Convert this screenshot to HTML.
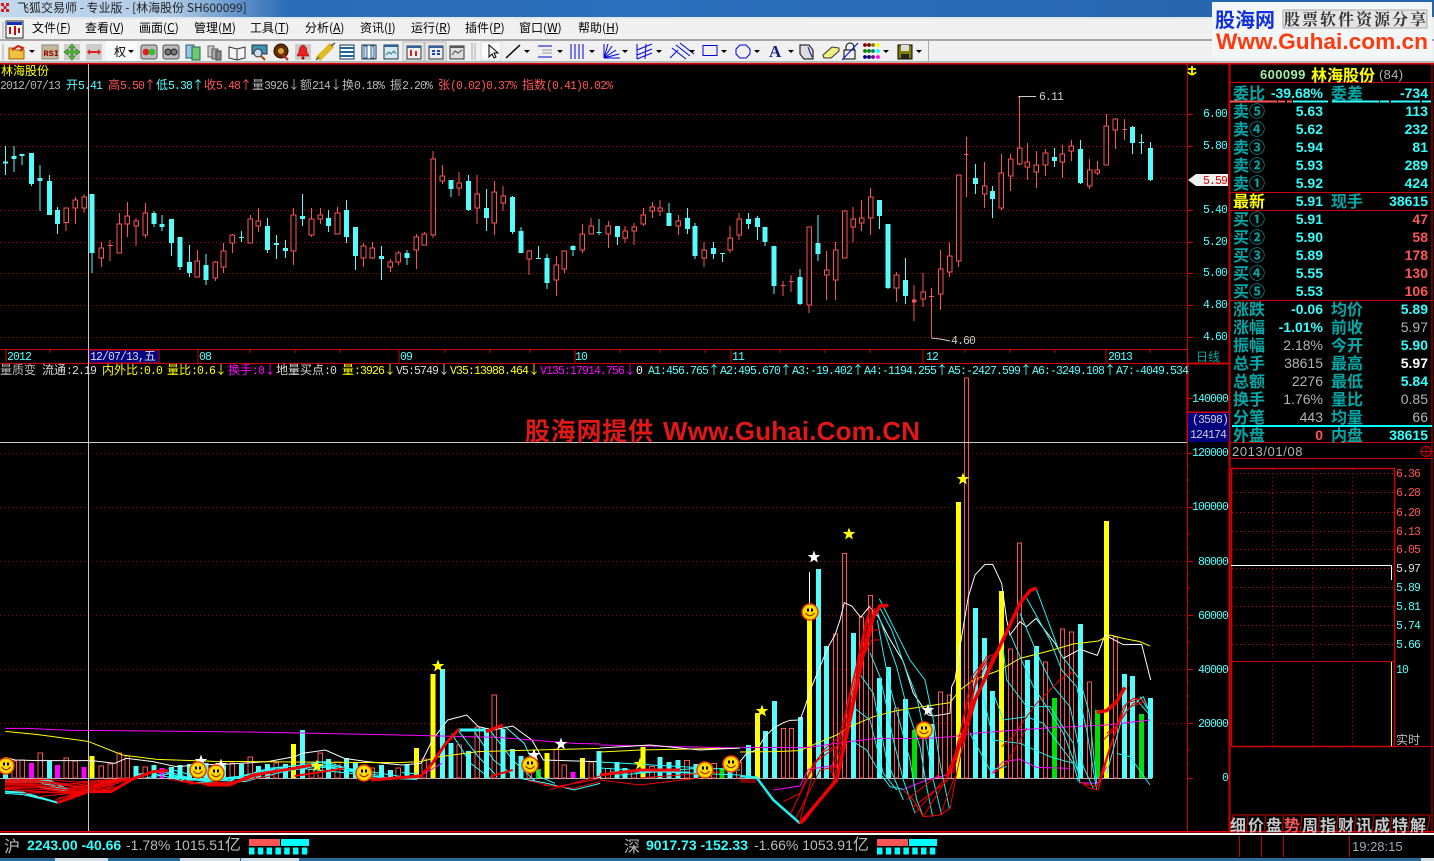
<!DOCTYPE html>
<html><head><meta charset="utf-8"><title>飞狐交易师</title>
<style>
html,body{margin:0;padding:0;background:#000;width:1434px;height:861px;overflow:hidden}
svg{position:absolute;left:0;top:0}
p{position:absolute;margin:0;white-space:pre}
i{font-style:normal;font:12px "WenQuanYi Zen Hei","Noto Sans CJK SC",sans-serif;line-height:0;letter-spacing:0}
.s{font:11.5px/12px "Liberation Mono",monospace;letter-spacing:-.9px;color:#5ff;margin-top:2px}
.m{font:12px/14px "WenQuanYi Zen Hei","Noto Sans CJK SC",sans-serif;color:#000}
.m u{text-decoration:underline}
.b{font:bold 16px/18px "WenQuanYi Zen Hei","Noto Sans CJK SC",sans-serif;color:#00a8a8;left:1233px;margin-top:-1px}
.l{left:1331px}
.v{font:bold 14px/18px "Liberation Sans",sans-serif;color:#3ff;right:111px}
.w{right:6px}
.g{color:#b4b4b4;font-weight:normal}
.r{color:#f55}
.t{font:bold 16px/18px "WenQuanYi Zen Hei","Noto Sans CJK SC",sans-serif;color:#c8c8c8;top:815px}
.q{font:bold 14px/18px "Liberation Sans",sans-serif;top:836px}
.q span{font:16px "WenQuanYi Zen Hei",sans-serif;line-height:0}
.n *{vector-effect:non-scaling-stroke}
</style></head><body>
<svg width="1434" height="861" viewBox="0 0 1434 861" xmlns="http://www.w3.org/2000/svg">
<defs>
<linearGradient id="tb" x1="0" x2="1" y1="0" y2="0"><stop offset="0" stop-color="#c4d8ec"/><stop offset=".12" stop-color="#b0cbe6"/><stop offset=".2" stop-color="#2b6cb6"/><stop offset=".45" stop-color="#2a70bc"/><stop offset="1" stop-color="#2563aa"/></linearGradient>
<g id="sm"><circle r="8" fill="#ffdd00" stroke="#f04000" stroke-width="1.500"/><rect x="-3" y="-3.500" width="2" height="3" fill="#000"/><rect x="1" y="-3.500" width="2" height="3" fill="#000"/><path d="M-4.500 1Q0 6.500 4.500 1" fill="none" stroke="#a03000" stroke-width="1.200"/></g>
<polygon id="st" points="0,-6.5 1.6,-2 6.3,-2 2.6,.9 3.9,5.5 0,2.8 -3.9,5.5 -2.6,.9 -6.3,-2 -1.6,-2"/>
</defs>
<!-- window chrome -->
<rect width="1434" height="17" fill="url(#tb)"/>
<rect y="17" width="1434" height="2" fill="#dfe8f0"/>
<rect y="19" width="1434" height="20" fill="#f0f0f0"/>
<rect y="39" width="1434" height="2" fill="#a8a8a8"/>
<rect y="41" width="1434" height="20" fill="#f0f0f0"/>
<rect y="61" width="1434" height="2" fill="#b4b4b4"/>
<rect y="63" width="1434" height="1.500" fill="#e00000"/>
<g fill="#d81818"><rect x="1" y="3" width="3" height="3"/><rect x="6" y="3" width="3" height="3"/><rect x="3.500" y="6" width="3" height="3"/><rect x="1" y="9" width="3" height="3"/><rect x="6" y="9" width="3" height="3"/></g>
<rect x="6" y="21" width="17" height="17" fill="#fff" stroke="#222"/><rect x="7" y="22" width="15" height="3" fill="#1030c0"/><path d="M10 27v7M15 26v9M19 28v5" stroke="#d00" stroke-width="2"/>
<path d="M3 22v16M3 44v16M475 43v17M472 43v17" stroke="#aaa"/>
<!-- toolbar icons -->
<g>
<path d="M9 48h5l2 2h8v9H9z" fill="#f0c040" stroke="#a06000"/><path d="M12 50l6-4 5 2-3 3" fill="none" stroke="#d02000" stroke-width="2"/>
<path d="M29 50h6l-3 3z" fill="#000"/>
<rect x="42" y="45" width="16" height="14" fill="#c8b898" stroke="#888"/>
<text x="43.500" y="56" font-family="Liberation Mono,monospace" font-size="8.500" font-weight="bold" fill="#800">RSI</text>
<rect x="64" y="44" width="16" height="16" fill="#ccc"/><path d="M72 44l3 4h-2v3h3v-2l4 3-4 3v-2h-3v3h2l-3 4-3-4h2v-3h-3v2l-4-3 4-3v2h3v-3h-2z" fill="#50c030" stroke="#206010" stroke-width=".6"/>
<rect x="86" y="44" width="16" height="16" fill="#ccc"/><path d="M87 52l3-3v2h8v-2l3 3-3 3v-2h-8v2z" fill="#e02020"/>
<rect x="106" y="41" width="31" height="20" fill="#fafafa"/><path d="M128 50h6l-3 3z" fill="#000"/>
<rect x="141" y="45" width="16" height="14" rx="2" fill="#bbb" stroke="#555"/><circle cx="146" cy="52" r="3.300" fill="#e02020"/><circle cx="152" cy="52" r="3.300" fill="#30c030"/>
<rect x="163" y="45" width="16" height="14" rx="2" fill="#bbb" stroke="#555"/><circle cx="168" cy="52" r="3" fill="#777" stroke="#222"/><circle cx="174" cy="52" r="3" fill="#777" stroke="#222"/>
<path d="M186 45h8v13h-8z" fill="#8cc8e8" stroke="#357"/><path d="M192 47h8v13h-8z" fill="#70c870" stroke="#264"/>
<path d="M208 46h6v11h-6z" fill="#ccc" stroke="#666"/><path d="M212 49h6v10h-6z" fill="#aaa" stroke="#555"/><path d="M216 51h5v9h-5z" fill="#888" stroke="#444"/>
<path d="M229 47l8 2 8-2v11l-8 2-8-2zM237 49v11" fill="#f4f4f4" stroke="#333"/>
<rect x="252" y="45" width="15" height="9" fill="#4090b0" stroke="#234"/><circle cx="258" cy="53" r="4" fill="#cde" stroke="#333"/><path d="M261 56l4 4" stroke="#b04010" stroke-width="2"/>
<circle cx="281" cy="51" r="7" fill="#603000" stroke="#201000"/><circle cx="281" cy="51" r="3" fill="#e0a040"/><path d="M282 54l6 6" stroke="#c02020" stroke-width="2"/>
<rect x="295" y="44" width="16" height="16" fill="#ccc"/><path d="M303 45q4 1 4 7l2 4h-12l2-4q0-6 4-7z" fill="#e82020" stroke="#801010" stroke-width=".5"/><circle cx="303" cy="58" r="1.500" fill="#a00"/>
<path d="M318 59l14-14" stroke="#e0b820" stroke-width="6"/><path d="M316 60l3-3M331 46l4-3" stroke="#555" stroke-width="1.500"/>
<rect x="340" y="45" width="14" height="14" fill="#fff" stroke="#134"/><path d="M340 48h14M340 52h14M340 56h14" stroke="#1868a0" stroke-width="2"/>
<rect x="362" y="45" width="14" height="14" fill="#fff" stroke="#134"/><path d="M364 46v12h3v-12zM371 46v12h3v-12z" fill="#cde" stroke="#369"/>
<rect x="384" y="45" width="14" height="14" fill="#d8e8f0" stroke="#134"/><rect x="384" y="45" width="14" height="2" fill="#3060a0"/><path d="M386 55l3-3 2 2 3-3 2 3" fill="none" stroke="#208080"/>
<rect x="403" y="42" width="21" height="19" fill="#e8e8e8" stroke="#bbb"/><rect x="407" y="46" width="14" height="13" fill="#eee" stroke="#333"/><rect x="407" y="46" width="14" height="2" fill="#3060a0"/><path d="M411 50v6M416 51v5" stroke="#d02020" stroke-width="2"/>
<rect x="425" y="42" width="21" height="19" fill="#e8e8e8" stroke="#bbb"/><rect x="429" y="46" width="14" height="13" fill="#eee" stroke="#333"/><rect x="429" y="46" width="14" height="2" fill="#3060a0"/><path d="M432 51h3M432 54h3M437 51h3M437 54h3" stroke="#2040c0" stroke-width="2"/>
<rect x="450" y="46" width="14" height="13" fill="#ddd" stroke="#333"/><rect x="450" y="46" width="14" height="2" fill="#555"/><path d="M452 55l3-4 3 2 4-3" fill="none" stroke="#444"/>
<rect x="481" y="42" width="20" height="18" fill="#fafafa" stroke="#ddd"/><path d="M489 45v12l3-3 2 4 2-1-2-4h4z" fill="#fff" stroke="#000"/>
<g stroke="#0000e0" fill="none">
<path d="M538 46h14M538 57h14"/><path d="M542 50h10M542 53h10" stroke="#999"/>
<path d="M571 44v15M575 44v15M579 44v15M583 44v15" />
<path d="M604 58V44M604 58l4-14M604 58l8-12M604 58l12-8M604 58l15-4M604 58h16"/>
<path d="M637 44v15M637 50l15-6M637 55l15-6M637 59l15-6M646 44l-1 15"/>
<path d="M670 58l8-8M672 48l14 11M676 45l14 11M680 43l14 11"/>
<rect x="703" y="45.500" width="14" height="10"/>
<path d="M740 45h6l4 4v5l-4 4h-6l-4-4v-5z"/>
</g>
<path d="M506 58l14-13" stroke="#000" stroke-width="1.500"/>
<text x="769" y="57" font-family="Liberation Serif,serif" font-size="17" font-weight="bold" fill="#102080">A</text>
<path d="M800 45h9l4 5v9h-9l-4-5z" fill="#ddd" stroke="#000"/><path d="M808 47l4 10" stroke="#00a"/>
<path d="M823 55l9-8 7 1v3l-8 7h-7z" fill="#f0f080" stroke="#333"/>
<rect x="844" y="50" width="11" height="9" fill="none" stroke="#000"/><path d="M846 50v-3a4 4 0 0 1 8 0v3" fill="none" stroke="#000"/><path d="M842 60l16-17" stroke="#0000e0"/>
<g fill="#800000"><circle cx="865" cy="45" r="1.900"/><circle cx="869" cy="45" r="1.900"/></g><circle cx="873" cy="45" r="1.900" fill="#808000"/><circle cx="878" cy="45" r="1.900" fill="#ff0"/>
<g fill="#008000"><circle cx="865" cy="51" r="1.900"/><circle cx="869" cy="51" r="1.900"/></g><circle cx="873" cy="51" r="1.900" fill="#008080"/><circle cx="878" cy="51" r="1.900" fill="#0ff"/>
<g fill="#000080"><circle cx="865" cy="57" r="1.900"/><circle cx="869" cy="57" r="1.900"/></g><circle cx="873" cy="57" r="1.900" fill="#800080"/><circle cx="878" cy="57" r="1.900" fill="#f0f"/>
<path d="M898 45h14v14h-14z" fill="#808000" stroke="#000"/><rect x="901" y="45" width="8" height="6" fill="#ddd"/><rect x="901" y="54" width="8" height="5" fill="#222"/>
<path d="M524 50h6l-3 3zM557 50h6l-3 3zM589 50h6l-3 3zM622 50h6l-3 3zM656 50h6l-3 3zM689 50h6l-3 3zM721 50h6l-3 3zM754 50h6l-3 3zM788 50h6l-3 3zM883 50h6l-3 3zM916 50h6l-3 3z" fill="#000"/>
<rect x="928" y="41" width="1" height="20" fill="#aaa"/>
</g>
<!-- watermark logo -->
<rect x="1212" y="2" width="220" height="55" fill="#f3f6f7"/>
<text x="1215" y="27" font-family="WenQuanYi Zen Hei,Noto Sans CJK SC,sans-serif" font-size="20" font-weight="bold" fill="#1030e0">股海网</text>
<rect x="1283" y="10" width="144" height="18" fill="#e4e4e4" stroke="#aaa"/>
<text x="1284" y="25" font-family="Noto Serif CJK SC,serif" font-size="16" font-weight="bold" fill="#333" textLength="142" lengthAdjust="spacing">股票软件资源分享</text>
<text x="1216" y="49" font-family="Liberation Sans,sans-serif" font-size="22" font-weight="bold" fill="#fb3a10" textLength="212" lengthAdjust="spacingAndGlyphs">Www.Guhai.com.cn</text>
<!-- chart grids -->
<g fill="none">
<path d="M0 114.500H1187M0 146.500H1187M0 178.500H1187M0 210.500H1187M0 242.500H1187M0 273.500H1187M0 305.500H1187M0 337.500H1187" stroke="#b80000" stroke-dasharray="1 3"/>
<path d="M0 453.500H1187M0 507.500H1187M0 561.500H1187M0 615.500H1187M0 669.500H1187M0 723.500H1187" stroke="#a00000" stroke-dasharray="1 3"/>
<path d="M0 778.500H1152" stroke="#b8b8b8"/>
</g>
<!-- frame lines -->
<g stroke="#d00000" fill="none" shape-rendering="crispEdges">
<path d="M0 349.500H1187M0 363.500H1187M1187.500 64V832" stroke-width="1"/>
<path d="M1229.500 64V832" stroke-width="2"/>
<path d="M1187.500 363V442" stroke-width="2"/>
<path d="M1230 82.500H1432M1230 192.500H1432M1230 210.500H1432M1230 300.500H1432M1230 442.500H1432M1230 458.500H1432M1432 64V832"/>
<path d="M1187 363.500H1229M1187 412.500H1229" stroke-width="2"/>
<path d="M6 350v13M89 350v13M159 350v13M198 350v13M399 350v13M575 350v13M731 350v13M923 350v13M1106 350v13M50 350v3M250 350v3M295 350v3M340 350v3M445 350v3M490 350v3M530 350v3M620 350v3M660 350v3M705 350v3M780 350v3M825 350v3M870 350v3M965 350v3M1010 350v3M1055 350v3M1150 350v3" />
<path d="M1187 114.500h6M1187 146.500h6M1187 210.500h6M1187 242.500h6M1187 273.500h6M1187 305.500h6M1187 337.500h6M1187 398.500h6M1187 453.500h6M1187 507.500h6M1187 561.500h6M1187 615.500h6M1187 669.500h6M1187 723.500h6M1187 778.500h6"/>
<path d="M1187 480h3M1187 534h3M1187 588h3M1187 642h3M1187 696h3M1187 750h3M1187 425h3M1187 466h2M1187 493h2M1187 520h2M1187 547h2M1187 574h2M1187 601h2M1187 628h2M1187 655h2M1187 682h2M1187 709h2M1187 736h2M1187 763h2"/>
</g>
<rect x="89" y="350" width="70" height="13" fill="#000080" stroke="#d00000"/>
<rect x="1188" y="413" width="41" height="29" fill="#000080"/>
<path d="M1188 180l8-6h32v12h-32z" fill="#f0f0f0"/>
<path d="M1192 66v9M1188 69h8M1188 72q4 5 8 0" fill="none" stroke="#ff0" stroke-width="1.800"/>
<!-- candles left -->
<g class="n" transform="translate(0 100) scale(.38265 .33333)" fill="none" shape-rendering="crispEdges">
<path stroke="#54fcfc" d="M14 138V225M37 138V216M58 162V195M82 159V258M105 195V333M129 225V345M150 321V402M241 282V519M403 333V381M424 345V393M448 357V468M471 411V510M495 435V531M539 462V555M631 393V426M699 354V459M722 405V477M746 420V474M790 282V378M858 330V396M905 300V429M929 381V510M997 438V540M1064 450V495M1179 240V291M1224 225V333M1271 267V393M1339 288V402M1362 381V459M1407 438V477M1430 462V567M1498 435V468M1566 357V405"/>
<path stroke="#54fcfc" stroke-width="5" d="M14 185V191M37 168V177M58 162V168M82 159V252M105 234V243M129 243V345M150 330V372M241 282V459M403 339V372M424 372V381M448 357V429M471 411V501M495 486V519M539 495V540M631 411V414M699 378V450M722 429V435M746 444V453M790 348V357M858 354V378M905 330V411M929 381V468M997 468V477M1064 459V474M1179 240V267M1224 243V330M1271 324V354M1339 291V396M1362 393V459M1407 474V477M1430 474V549M1498 438V450M1566 396V399"/>
<path stroke="#fc5454" d="M173 324V393M197 291V372M220 282V339M265 426V501M288 420V483M312 339V459M333 306V411M356 354V438M380 309V414M516 450V531M563 483V543M584 429V519M607 402V459M654 345V429M675 324V396M767 324V495M814 324V411M837 324V372M882 321V402M950 429V501M973 426V477M1020 477V516M1041 453V495M1088 402V507M1109 396V435M1132 153V414M1156 195V252M1200 216V288M1247 225V372M1292 243V405M1315 258V333M1383 450V525M1454 468V588M1475 453V519M1522 372V459M1545 354V402M282 436H295"/>
<path stroke="#fc5454" fill="#000" d="M167 324h12v44h-12zM191 300h12v24h-12zM214 291h12v33h-12zM259 444h12v30h-12zM306 372h12v87h-12zM327 348h12v24h-12zM350 363h12v15h-12zM374 339h12v66h-12zM510 483h12v48h-12zM557 486h12v48h-12zM578 453h12v48h-12zM601 405h12v24h-12zM648 357h12v72h-12zM669 363h12v15h-12zM761 345h12v108h-12zM808 357h12v48h-12zM831 345h12v12h-12zM876 339h12v63h-12zM944 438h12v36h-12zM967 444h12v30h-12zM1014 486h12v15h-12zM1035 459h12v27h-12zM1082 411h12v39h-12zM1103 402h12v33h-12zM1126 177h12v228h-12zM1150 228h12v15h-12zM1194 249h12v15h-12zM1241 282h12v42h-12zM1286 276h12v93h-12zM1309 288h12v21h-12zM1377 453h12v24h-12zM1448 495h12v45h-12zM1469 453h12v54h-12zM1516 402h12v48h-12zM1539 378h12v24h-12z"/>
</g>
<!-- candles right -->
<g class="n" transform="translate(600 100) scale(.37627 .33333)" fill="none" shape-rendering="crispEdges">
<path stroke="#54fcfc" d="M46 378V435M184 309V378M232 324V402M253 369V477M301 426V477M325 459V486M394 339V387M418 348V420M439 381V438M463 438V582M532 507V615M580 345V483M743 300V387M766 372V567M812 474V612M998 192V282M1043 258V354M1208 144V201M1277 120V252M1415 78V162M1439 102V162M1463 126V243"/>
<path stroke="#54fcfc" stroke-width="5" d="M46 378V411M184 339V378M232 354V387M253 378V468M301 444V462M325 459V462M394 357V372M418 354V381M439 381V426M463 438V558M532 531V612M580 429V462M743 300V348M766 372V564M812 540V588M998 234V252M1043 273V297M1208 171V183M1277 147V249M1415 81V129M1439 126V129M1463 144V240"/>
<path stroke="#fc5454" d="M22 363V444M67 378V429M91 369V435M115 324V378M139 306V354M160 300V348M208 345V405M277 426V501M346 378V459M370 339V420M487 543V588M508 525V576M556 381V639M602 453V600M626 426V600M650 330V474M673 321V426M695 300V393M719 264V405M788 516V606M835 555V663M859 519V621M881 564V711M905 450V630M929 427V531M953 225V501M974 111V291M1022 186V324M1067 162V330M1091 162V273M1115 -9V195M1136 129V240M1160 153V264M1184 147V228M1229 135V234M1253 120V183M1301 177V267M1322 183V225M1346 42V195M1370 54V147M1394 57V120"/>
<path stroke="#fc5454" d="M481 556H493M502 544H514M875 589H887M968 163H980M1388 88H1400"/>
<path stroke="#fc5454" fill="#000" d="M16 378h12v24h-12zM61 393h12v21h-12zM85 381h12v12h-12zM109 345h12v27h-12zM133 321h12v12h-12zM154 324h12v9h-12zM202 363h12v15h-12zM271 450h12v24h-12zM340 414h12v36h-12zM364 357h12v48h-12zM550 381h12v234h-12zM596 510h12v15h-12zM620 450h12v90h-12zM644 333h12v141h-12zM667 357h12v24h-12zM689 354h12v15h-12zM713 291h12v63h-12zM782 525h12v39h-12zM853 576h12v21h-12zM899 507h12v75h-12zM923 468h12v48h-12zM947 225h12v258h-12zM1016 258h12v24h-12zM1061 219h12v105h-12zM1085 177h12v51h-12zM1109 144h12v48h-12zM1130 186h12v15h-12zM1154 195h12v21h-12zM1178 159h12v36h-12zM1223 162h12v24h-12zM1247 138h12v15h-12zM1295 210h12v48h-12zM1316 210h12v9h-12zM1340 78h12v117h-12zM1364 57h12v33h-12z"/>
<path stroke="#fc5454" stroke-width="3" d="M829 603H841"/>
</g>
<path d="M1019 98V96.500H1036" stroke="#ccc" fill="none"/>
<path d="M931 338L940 339L950 341" stroke="#ccc" fill="none"/>
<!-- volume bars left -->
<g class="n" transform="translate(0 650) scale(.38265 .33333)" fill="none" shape-rendering="crispEdges">
<path stroke="#54fcfc" stroke-width="5" d="M14 370V384M129 333V384M356 348V384M403 345V384M448 351V384M471 345V384M495 342V384M539 339V384M584 346V384M631 342V384M675 348V384M699 342V384M746 342V384M790 240V384M858 327V384M905 324V384M929 336V384M997 345V384M1020 360V384M1064 345V384M1156 57V384M1179 279V384M1224 303V384M1271 240V384M1315 237V384M1339 297V384M1362 318V384M1566 303V384"/>
<path stroke="#ff0" stroke-width="5" d="M241 318V384M767 282V384M1088 294V384M1132 72V384M1430 309V384M1522 324V384"/>
<path stroke="#f0f" stroke-width="5" d="M82 339V384M150 345V384M220 351V384M424 354V384M1498 366V384"/>
<path stroke="#00e000" stroke-width="5" d="M1407 357V384"/>
<path stroke="#fc5454" d="M31 333h12v51h-12zM52 330h12v54h-12zM99 309h12v75h-12zM167 324h12v60h-12zM191 333h12v51h-12zM259 348h12v36h-12zM282 342h12v42h-12zM306 309h12v75h-12zM327 318h12v66h-12zM374 351h12v33h-12zM510 345h12v39h-12zM557 352h12v32h-12zM601 339h12v45h-12zM648 321h12v63h-12zM716 339h12v45h-12zM808 357h12v27h-12zM831 309h12v75h-12zM876 336h12v48h-12zM944 348h12v36h-12zM967 354h12v30h-12zM1035 354h12v30h-12zM1103 327h12v57h-12zM1194 285h12v99h-12zM1241 231h12v153h-12zM1286 135h12v249h-12zM1377 324h12v60h-12zM1448 297h12v87h-12zM1469 345h12v39h-12zM1539 336h12v48h-12z"/>
<!-- lines -->
<path stroke="#fff" d="M14 322L40 330L100 332L240 332L300 340L330 325L400 335L460 350L520 345L600 342L700 335L770 320L790 310L850 300L900 325L960 335L1050 345L1100 340L1130 270L1170 210L1220 195L1250 230L1290 240L1340 228L1390 270L1420 330L1560 335" shape-rendering="auto"/>
<path stroke="#ff0" d="M14 244L100 254L230 274L320 315L410 328L560 334L770 336L1040 338L1100 335L1150 320L1250 305L1400 300L1568 295" shape-rendering="auto"/>
<path stroke="#f0f" d="M14 235L70 235L190 241L400 243L700 247L1000 254L1300 262L1500 280L1568 282" shape-rendering="auto"/>
<g stroke="#3ff" shape-rendering="auto">
<path d="M13 388L130 392L180 420M13 395L100 395L170 420M100 410L170 425M13 425L60 428L150 458" stroke-width="2"/>
<path d="M13 430L60 434L140 455M60 392L130 400L175 424"/>
<path d="M350 378L420 362L500 398L620 398L720 362L810 345L860 350L1000 385L1090 388M400 370L470 390L600 392L700 355L830 340M440 380L540 395L660 380L760 348M600 385L720 355L850 335L950 370M360 372L430 366L480 385L640 395L730 368L820 350L900 358L1000 378M430 362L500 385L600 386L700 362L850 345L950 362L1050 380M380 384L440 372L520 392L680 372L790 356L900 368L1020 384"/>
<path d="M440 356L500 375M850 340L960 376M830 334L930 366M1050 368L1095 372"/>
<path d="M1200 240L1270 240" stroke-width="3"/>
<path d="M1180 250L1230 340L1280 384M1200 245L1250 320L1300 380M1240 245L1290 330L1340 375M1280 240L1340 330L1400 395M1320 230L1370 280L1410 380L1450 400M1360 385L1430 400L1500 420L1568 400"/>
</g>
<g stroke="#f00000" shape-rendering="auto">
<path d="M13 392L100 392L180 402L350 386M13 398L100 398L200 410L340 390M13 404L90 405L170 418L320 395M13 412L100 412L170 425L300 405M13 418L120 425L200 432L290 415M60 430L180 425L290 420M100 440L230 425M140 452L240 415M200 440L300 395"/>
<path d="M13 389L120 388L200 396L355 384M13 395L110 395L190 406L345 388M13 401L95 402L180 414L330 392M13 408L95 408L175 421L310 400M13 415L110 418L190 428L295 410M30 420L130 428L215 430M150 445L230 428L300 412M170 440L250 408L320 388M230 430L270 395L340 385M180 450L225 405"/>
<path d="M440 388L520 400L620 395L720 375M470 395L560 405L650 385M490 402L600 398L700 370M480 390L540 405L600 402L680 372"/>
<path d="M1380 392L1450 410L1530 395L1568 385M1420 405L1500 415L1568 395M1440 418L1568 378"/>
<path d="M770 378L900 355M1280 380L1340 360" stroke-width="2"/>
</g>
<g stroke="#f00000" stroke-width="3" shape-rendering="auto">
<path d="M150 458L230 425L290 425L350 385L400 365L440 362M540 405L600 405L660 375L770 355L815 345M970 390L1100 378L1130 340L1165 280L1200 237M1270 245L1315 225"/>
</g>
<path stroke="#f0f" d="M1110 370L1155 340M420 372L428 384" shape-rendering="auto"/>
</g>
<!-- mid bars 600-740 -->
<g fill="none" shape-rendering="crispEdges">
<path stroke="#54fcfc" stroke-width="5" d="M617 762V778M625 768V778M660 757V778M669 762V778M678 760V778M696 764V778M705 768V778M730 760V778"/>
<path stroke="#ff0" stroke-width="5" d="M643 747V778"/>
<path stroke="#00e000" stroke-width="5" d="M722 768V778"/>
<path stroke="#fc5454" d="M605.500 768.500h5V778h-5zM631.500 770.500h5V778h-5zM649.500 766.500h5V778h-5zM684.500 760.500h5V778h-5zM711.500 763.500h5V778h-5zM736.500 762.500h5V778h-5z"/>
</g>
<g fill="none" stroke-width="1">
<path stroke="#ff0" d="M600 752L640 750L740 748"/>
<path stroke="#f0f" d="M600 745L740 748"/>
<path stroke="#fff" d="M600 748L650 745L700 750L740 748"/>
<path stroke="#3ff" d="M600 768L660 772L740 775M610 772L690 772M600 762L670 766L740 770M620 775L700 768"/>
<path stroke="#f00000" stroke-width="3" d="M600 775L640 770L680 770"/>
<path stroke="#f00000" d="M600 780L640 785L700 778M640 778L720 772"/>
</g>
<!-- right lower chart -->
<g class="n" transform="translate(740 480) scale(.33333)" fill="none" shape-rendering="crispEdges">
<path stroke="#54fcfc" stroke-width="5" d="M25 795V894M76 753V894M103 663V894M181 711V894M235 267V894M260 498V894M340 459V894M418 594V894M445 561V894M496 657V894M574 732V894M706 384V894M733 474V894M758 633V894M862 540V894M889 498V894M1021 432V894M1153 582V894M1177 588V894M1231 654V894"/>
<path stroke="#ff0" stroke-width="5" d="M52 699V894M208 400V894M655 66V894M784 333V894M1099 123V894"/>
<path stroke="#00e000" stroke-width="5" d="M523 750V894M943 654V894M1072 690V894M1204 702V894"/>
<path stroke="#fc5454" d="M124 745h12v149h-12zM148 745h12v149h-12zM280 462h12v432h-12zM307 220h12v674h-12zM358 411h12v483h-12zM385 346h12v548h-12zM463 684h12v210h-12zM595 636h12v258h-12zM622 645h12v249h-12zM673 -306h12v1200h-12zM805 507h12v387h-12zM832 189h12v705h-12zM910 546h12v348h-12zM961 447h12v447h-12zM988 456h12v438h-12zM1042 606h12v288h-12zM1120 471h12v423h-12z"/>
<path stroke="#fff" d="M549 770V894M208 276V370"/>
<g shape-rendering="auto">
<path stroke="#fff" d="M0 845L20 820L50 810L75 770L100 745L130 728L150 721L180 720L195 680L215 620L265 500L285 465L300 420L313 368L335 378L362 412L388 380L415 410L445 470L490 545L520 640L565 705L580 708L630 700L635 620L645 600L660 500L685 350L705 285L735 253L758 253L785 310L800 420L810 465L840 425L860 440L888 415L945 490L970 535L1020 508L1072 526L1095 465L1150 494L1205 493L1232 600"/>
<path stroke="#ff0" d="M0 816L100 815L180 812L230 790L290 765L330 740L400 710L470 692L550 680L630 668L660 630L700 600L780 570L840 535L920 515L1000 492L1075 483L1110 465L1150 475L1200 485L1230 498"/>
<path stroke="#f0f" d="M0 802L200 803L290 790L400 776L560 775L640 770L700 760L860 748L950 742L1100 735L1230 720M100 930L180 918L205 868L290 855M490 928L560 900L620 885M755 880L790 845L840 838L890 862L990 865M1020 908L1075 910L1100 860"/>
<path stroke="#2ee" d="M418 356L460 440L510 540L555 600L580 720L600 850L628 985M415 375L455 450L495 560L530 650L560 790L580 900L605 1005M412 395L445 490L470 560L500 680L540 800L560 920L578 1010M412 420L430 520L450 620L480 730L510 840L530 960L550 1010M390 518L420 590L440 680L460 780L490 900L525 1000M362 586L400 640L420 740L440 840L490 960M340 682L390 720L410 800L430 880L470 930M340 785L380 810L420 880L450 920L490 928"/>
<path stroke="#2ee" d="M890 330L960 520L1020 600L1048 700L1070 910M860 355L930 480L965 570L1010 620L1040 750L1070 930M840 400L900 540L940 620L990 680L1030 860L1060 925M810 460L840 530L880 620L920 680L970 760L1020 890M790 510L800 600L860 680L930 680L1000 790L1020 910M760 640L790 720L860 710L910 730L1000 850L1015 905M730 650L760 780L840 790L930 830L1000 850M690 760L750 870L800 860M1100 880L1150 700L1210 650L1230 700M1130 820L1170 830L1230 915M1190 660L1225 700M1200 650L1225 690"/>
<path stroke="#f00000" d="M0 900L50 900M0 906L50 906M130 965L180 940L220 850L290 800M150 1005L210 880L250 810L300 770M180 1020L230 840L250 815L285 800M165 1020L200 950L240 870L290 860M180 1030L280 905L320 720L360 530L392 378M186 1030L288 900L326 710L366 520L398 382M192 1026L292 895L330 700L372 510L404 384M296 880L336 690L378 500L410 386M276 890L314 720L354 540L386 392M270 880L308 730L348 560L380 410M340 640L395 450L420 450M340 590L395 480L420 480"/>
<path stroke="#f00000" d="M490 930L520 960L550 1010L600 1005L630 985L650 880M500 960L600 880M525 1000L620 890M550 1010L630 880M600 1005L645 890M515 985L625 900M630 880L700 600L740 530L770 520M640 880L710 590L750 525M650 880L715 575L745 535M635 880L695 590L735 540M660 830L720 620L760 525M645 860L705 620L742 545"/>
<path stroke="#f00000" d="M785 800L820 770L860 710L890 670L960 600L1000 575M760 880L800 850L860 745M1020 905L1050 925L1075 930L1110 800L1150 680L1180 655L1210 660M1030 910L1070 920L1120 770L1160 670L1200 655M1075 925L1100 830L1140 720L1180 670L1215 665M1080 910L1130 740L1170 680L1205 670M1090 780L1130 740M1100 760L1140 730"/>
<path stroke="#2ee" stroke-width="2.500" d="M0 888L50 893L100 960L180 1030"/>
<path stroke="#f00000" stroke-width="3.500" d="M180 1030L290 900L330 720L370 520L400 410L420 378L445 376M620 890L650 820L700 670L770 520L840 370L870 332L890 324M1070 697L1100 692L1130 665L1155 622"/>
</g>
</g>
<!-- stars and smileys -->
<g fill="#ff0"><use href="#st" x="438" y="666"/><use href="#st" x="317" y="766"/><use href="#st" x="762" y="711"/><use href="#st" x="849" y="534"/><use href="#st" x="963" y="479"/><use href="#st" x="640" y="764"/></g>
<g fill="#fff"><use href="#st" x="814" y="557"/><use href="#st" x="928" y="710"/><use href="#st" x="201" y="761"/><use href="#st" x="221" y="765"/><use href="#st" x="561" y="744"/><use href="#st" x="534" y="755"/></g>
<use href="#sm" x="6" y="766"/><use href="#sm" x="198" y="770"/><use href="#sm" x="216" y="773"/><use href="#sm" x="364" y="773"/><use href="#sm" x="530" y="765"/><use href="#sm" x="705" y="770"/><use href="#sm" x="731" y="764"/><use href="#sm" x="810" y="612"/><use href="#sm" x="924" y="730"/>
<!-- crosshair -->
<path d="M88.500 64V832M0 442.500H1187" stroke="#c8c8c8" fill="none"/>
<!-- watermark text -->
<text x="525" y="440" font-family="Noto Sans CJK SC,WenQuanYi Zen Hei,sans-serif" font-size="25" font-weight="bold" fill="#e01818" textLength="128">股海网提供</text>
<text x="663" y="440" font-family="Liberation Sans,sans-serif" font-size="26" font-weight="bold" fill="#e01818" textLength="257">Www.Guhai.Com.CN</text>
<!-- right panel details -->
<path d="M1230 101.500h47M1278 101.500h7M1287 101.500h5" stroke="#f55" stroke-width="2" fill="none"/>
<path d="M1293 101.500h35M1332 101.500h12M1344 101.500h35M1380 101.500h9M1391 101.500h29M1422 101.500h9" stroke="#3ff" stroke-width="2" fill="none"/>
<rect x="1232" y="425" width="200" height="2" fill="#0ff"/>
<g fill="none" stroke="#d00000">
<circle cx="1426" cy="451.500" r="5"/><path d="M1420 451.500h12M1426 446v11"/>
<rect x="1231.500" y="468.500" width="163" height="278" stroke-width="1.500"/>
<path d="M1231 661.500H1394M1394 746.500H1432" />
<path d="M1272.500 469V746M1312.500 469V746M1352.500 469V746M1232 473.500H1394M1232 492.500H1394M1232 512.500H1394M1232 531.500H1394M1232 549.500H1394M1232 568.500H1394M1232 587.500H1394M1232 606.500H1394M1232 625.500H1394M1232 644.500H1394" stroke-dasharray="1 3"/>
<path d="M1230 832L1233 815H1248L1246 832M1248 815H1266L1264 832M1266 815H1284L1282 832M1284 815H1302L1300 832M1302 815H1320L1318 832M1320 815H1338L1336 832M1338 815H1356L1354 832M1356 815H1374L1372 832M1374 815H1392L1390 832M1392 815H1410L1408 832M1410 815H1430L1427 832"/>
</g>
<path d="M1231 565.500H1391.500V580" fill="none" stroke="#fff"/>
<path d="M1391.500 662V746" stroke="#ff0"/>
<!-- bottom -->
<rect y="831" width="1434" height="1.500" fill="#f00000"/>
<rect y="833" width="1434" height="2" fill="#fff"/>
<rect y="835" width="1434" height="23" fill="#000"/>
<rect y="858" width="1434" height="3" fill="#2a6a96"/>
<rect x="55" y="858" width="53" height="3" fill="#cfdce6"/><rect x="180" y="858" width="60" height="3" fill="#cfdce6"/><rect x="241" y="858" width="58" height="3" fill="#cfdce6"/><rect x="1421" y="858" width="13" height="3" fill="#cfdce6"/>
<path d="M1239.500 836V857M1261.500 836V857M1283.500 836V857M1349.500 836V857" stroke="#c00000"/>
<rect x="249" y="839" width="31" height="7" fill="#f55"/><rect x="281" y="839" width="28" height="7" fill="#0ff"/>
<path d="M249 851h60" stroke="#0ff" stroke-width="7" stroke-dasharray="5.500 3.300"/>
<rect x="877" y="839" width="31" height="7" fill="#f55"/><rect x="909" y="839" width="28" height="7" fill="#0ff"/>
<path d="M877 851h60" stroke="#0ff" stroke-width="7" stroke-dasharray="5.500 3.300"/>
</svg>
<!-- titlebar / menu -->
<p class="m" style="left:17px;top:1px;color:#222">飞狐交易师 - 专业版 - [林海股份 SH600099]</p>
<p class="m" style="left:32px;top:21px">文件(<u>F</u>)</p>
<p class="m" style="left:85px;top:21px">查看(<u>V</u>)</p>
<p class="m" style="left:139px;top:21px">画面(<u>C</u>)</p>
<p class="m" style="left:194px;top:21px">管理(<u>M</u>)</p>
<p class="m" style="left:250px;top:21px">工具(<u>T</u>)</p>
<p class="m" style="left:305px;top:21px">分析(<u>A</u>)</p>
<p class="m" style="left:360px;top:21px">资讯(<u>I</u>)</p>
<p class="m" style="left:411px;top:21px">运行(<u>R</u>)</p>
<p class="m" style="left:465px;top:21px">插件(<u>P</u>)</p>
<p class="m" style="left:519px;top:21px">窗口(<u>W</u>)</p>
<p class="m" style="left:578px;top:21px">帮助(<u>H</u>)</p>
<p class="m" style="left:114px;top:45px">权</p>
<!-- upper info -->
<p class="s" style="left:1px;top:65px;color:#ff0"><i>林海股份</i></p>
<p class="s" style="left:0;top:79px;color:#b8b8b8">2012/07/13</p>
<p class="s" style="left:66px;top:79px"><i>开</i>5.41</p>
<p class="s" style="left:108px;top:79px;color:#f55"><i>高</i>5.50<i>↑</i></p>
<p class="s" style="left:156px;top:79px"><i>低</i>5.38<i>↑</i></p>
<p class="s" style="left:204px;top:79px;color:#f55"><i>收</i>5.48<i>↑</i></p>
<p class="s" style="left:252px;top:79px;color:#b8b8b8"><i>量</i>3926<i>↓</i></p>
<p class="s" style="left:300px;top:79px;color:#b8b8b8"><i>额</i>214<i>↓</i></p>
<p class="s" style="left:342px;top:79px;color:#b8b8b8"><i>换</i>0.18%</p>
<p class="s" style="left:390px;top:79px;color:#b8b8b8"><i>振</i>2.20%</p>
<p class="s" style="left:438px;top:79px;color:#f55"><i>张</i>(0.02)0.37%</p>
<p class="s" style="left:522px;top:79px;color:#f55"><i>指数</i>(0.41)0.02%</p>
<p class="s" style="left:1039px;top:90px;color:#ccc">6.11</p>
<p class="s" style="left:951px;top:334px;color:#ccc">4.60</p>
<!-- axis -->
<p class="s" style="left:1203px;top:107px">6.00</p>
<p class="s" style="left:1203px;top:139px">5.80</p>
<p class="s" style="left:1203px;top:174px;color:#e00000">5.59</p>
<p class="s" style="left:1203px;top:203px">5.40</p>
<p class="s" style="left:1203px;top:235px">5.20</p>
<p class="s" style="left:1203px;top:266px">5.00</p>
<p class="s" style="left:1203px;top:298px">4.80</p>
<p class="s" style="left:1203px;top:330px">4.60</p>
<p class="s" style="left:1196px;top:351px;color:#00a8a8"><i>日线</i></p>
<p class="s" style="left:1192px;top:392px">140000</p>
<p class="s" style="left:1192px;top:413px;color:#ccc">(3598)</p>
<p class="s" style="left:1190px;top:428px;color:#ccc">124174</p>
<p class="s" style="left:1192px;top:446px">120000</p>
<p class="s" style="left:1192px;top:500px">100000</p>
<p class="s" style="left:1198px;top:555px">80000</p>
<p class="s" style="left:1198px;top:609px">60000</p>
<p class="s" style="left:1198px;top:663px">40000</p>
<p class="s" style="left:1198px;top:717px">20000</p>
<p class="s" style="left:1222px;top:771px">0</p>
<!-- time axis -->
<p class="s" style="left:7px;top:350px">2012</p>
<p class="s" style="left:90px;top:350px;color:#ddd">12/07/13,<i>五</i></p>
<p class="s" style="left:199px;top:350px">08</p>
<p class="s" style="left:400px;top:350px">09</p>
<p class="s" style="left:575px;top:350px">10</p>
<p class="s" style="left:732px;top:350px">11</p>
<p class="s" style="left:926px;top:350px">12</p>
<p class="s" style="left:1108px;top:350px">2013</p>
<!-- indicator line -->
<p class="s" style="left:0;top:364px;color:#bbb"><i>量质变</i></p>
<p class="s" style="left:42px;top:364px;color:#ddd"><i>流通</i>:2.19</p>
<p class="s" style="left:102px;top:364px;color:#ff0"><i>内外比</i>:0.0</p>
<p class="s" style="left:167px;top:364px;color:#ff0"><i>量比</i>:0.6<i>↓</i></p>
<p class="s" style="left:228px;top:364px;color:#f0f"><i>换手</i>:0<i>↓</i></p>
<p class="s" style="left:276px;top:364px;color:#ddd"><i>地量买点</i>:0</p>
<p class="s" style="left:342px;top:364px;color:#ff0"><i>量</i>:3926<i>↓</i></p>
<p class="s" style="left:396px;top:364px;color:#ddd">V5:5749<i>↓</i></p>
<p class="s" style="left:450px;top:364px;color:#ff0">V35:13988.464<i>↓</i></p>
<p class="s" style="left:540px;top:364px;color:#f0f">V135:17914.756<i>↓</i></p>
<p class="s" style="left:636px;top:364px;color:#fff">0</p>
<p class="s" style="left:648px;top:364px">A1:456.765<i>↑</i></p>
<p class="s" style="left:720px;top:364px">A2:495.670<i>↑</i></p>
<p class="s" style="left:792px;top:364px">A3:-19.402<i>↑</i></p>
<p class="s" style="left:864px;top:364px">A4:-1194.255<i>↑</i></p>
<p class="s" style="left:948px;top:364px">A5:-2427.599<i>↑</i></p>
<p class="s" style="left:1032px;top:364px">A6:-3249.108<i>↑</i></p>
<p class="s" style="left:1116px;top:364px">A7:-4049.534</p>
<!-- quote panel -->
<p class="v" style="left:1260px;right:auto;top:66px;color:#a0f0a0;font-size:13px;letter-spacing:.4px">600099</p>
<p class="b" style="left:1311px;top:66px;color:#ff0">林海股份</p>
<p class="v g" style="left:1379px;right:auto;top:66px;font-size:13px;letter-spacing:.3px">(84)</p>
<p class="b" style="top:84px">委比</p><p class="v" style="top:84px">-39.68%</p><p class="b l" style="top:84px">委差</p><p class="v w" style="top:84px">-734</p>
<p class="b" style="top:102px">卖⑤</p><p class="v" style="top:102px">5.63</p><p class="v w" style="top:102px">113</p>
<p class="b" style="top:120px">卖④</p><p class="v" style="top:120px">5.62</p><p class="v w" style="top:120px">232</p>
<p class="b" style="top:138px">卖③</p><p class="v" style="top:138px">5.94</p><p class="v w" style="top:138px">81</p>
<p class="b" style="top:156px">卖②</p><p class="v" style="top:156px">5.93</p><p class="v w" style="top:156px">289</p>
<p class="b" style="top:174px">卖①</p><p class="v" style="top:174px">5.92</p><p class="v w" style="top:174px">424</p>
<p class="b" style="top:192px;color:#ff0">最新</p><p class="v" style="top:192px">5.91</p><p class="b l" style="top:192px">现手</p><p class="v w" style="top:192px">38615</p>
<p class="b" style="top:210px">买①</p><p class="v" style="top:210px">5.91</p><p class="v w r" style="top:210px">47</p>
<p class="b" style="top:228px">买②</p><p class="v" style="top:228px">5.90</p><p class="v w r" style="top:228px">58</p>
<p class="b" style="top:246px">买③</p><p class="v" style="top:246px">5.89</p><p class="v w r" style="top:246px">178</p>
<p class="b" style="top:264px">买④</p><p class="v" style="top:264px">5.55</p><p class="v w r" style="top:264px">130</p>
<p class="b" style="top:282px">买⑤</p><p class="v" style="top:282px">5.53</p><p class="v w r" style="top:282px">106</p>
<p class="b" style="top:300px">涨跌</p><p class="v" style="top:300px">-0.06</p><p class="b l" style="top:300px">均价</p><p class="v w" style="top:300px">5.89</p>
<p class="b" style="top:318px">涨幅</p><p class="v" style="top:318px">-1.01%</p><p class="b l" style="top:318px">前收</p><p class="v w g" style="top:318px">5.97</p>
<p class="b" style="top:336px">振幅</p><p class="v g" style="top:336px">2.18%</p><p class="b l" style="top:336px">今开</p><p class="v w" style="top:336px">5.90</p>
<p class="b" style="top:354px">总手</p><p class="v g" style="top:354px">38615</p><p class="b l" style="top:354px">最高</p><p class="v w" style="top:354px;color:#fff">5.97</p>
<p class="b" style="top:372px">总额</p><p class="v g" style="top:372px">2276</p><p class="b l" style="top:372px">最低</p><p class="v w" style="top:372px">5.84</p>
<p class="b" style="top:390px">换手</p><p class="v g" style="top:390px">1.76%</p><p class="b l" style="top:390px">量比</p><p class="v w g" style="top:390px">0.85</p>
<p class="b" style="top:408px">分笔</p><p class="v g" style="top:408px">443</p><p class="b l" style="top:408px">均量</p><p class="v w g" style="top:408px">66</p>
<p class="b" style="top:426px">外盘</p><p class="v r" style="top:426px">0</p><p class="b l" style="top:426px">内盘</p><p class="v w" style="top:426px">38615</p>
<p class="v g" style="left:1232px;right:auto;top:443px;font-size:13px;letter-spacing:.6px">2013/01/08</p>
<!-- mini chart labels -->
<p class="s" style="left:1396px;top:467px;color:#f55">6.36</p>
<p class="s" style="left:1396px;top:486px;color:#f55">6.28</p>
<p class="s" style="left:1396px;top:506px;color:#f55">6.20</p>
<p class="s" style="left:1396px;top:525px;color:#f55">6.13</p>
<p class="s" style="left:1396px;top:543px;color:#f55">6.05</p>
<p class="s" style="left:1396px;top:562px;color:#ddd">5.97</p>
<p class="s" style="left:1396px;top:581px">5.89</p>
<p class="s" style="left:1396px;top:600px">5.81</p>
<p class="s" style="left:1396px;top:619px">5.74</p>
<p class="s" style="left:1396px;top:638px">5.66</p>
<p class="s" style="left:1396px;top:663px">10</p>
<p class="s" style="left:1396px;top:734px;color:#bbb"><i>实时</i></p>
<!-- tabs -->
<p class="t" style="left:1230px">细</p><p class="t" style="left:1248px">价</p><p class="t" style="left:1266px">盘</p><p class="t" style="left:1284px;color:#f55">势</p><p class="t" style="left:1302px">周</p><p class="t" style="left:1320px">指</p><p class="t" style="left:1338px">财</p><p class="t" style="left:1356px">讯</p><p class="t" style="left:1374px">成</p><p class="t" style="left:1392px">特</p><p class="t" style="left:1410px">解</p>
<!-- status -->
<p class="t" style="left:4px;top:836px;color:#bbb;font-weight:normal">沪</p>
<p class="q" style="left:27px;color:#3ff">2243.00 -40.66</p>
<p class="q" style="left:126px;color:#bbb;font-weight:normal">-1.78% 1015.51<span>亿</span></p>
<p class="t" style="left:624px;top:836px;color:#bbb;font-weight:normal">深</p>
<p class="q" style="left:646px;color:#3ff">9017.73 -152.33</p>
<p class="q" style="left:754px;color:#bbb;font-weight:normal">-1.66% 1053.91<span>亿</span></p>
<p class="q" style="left:1352px;top:838px;color:#9ab;font-weight:normal;font-size:13px">19:28:15</p>
</body></html>
